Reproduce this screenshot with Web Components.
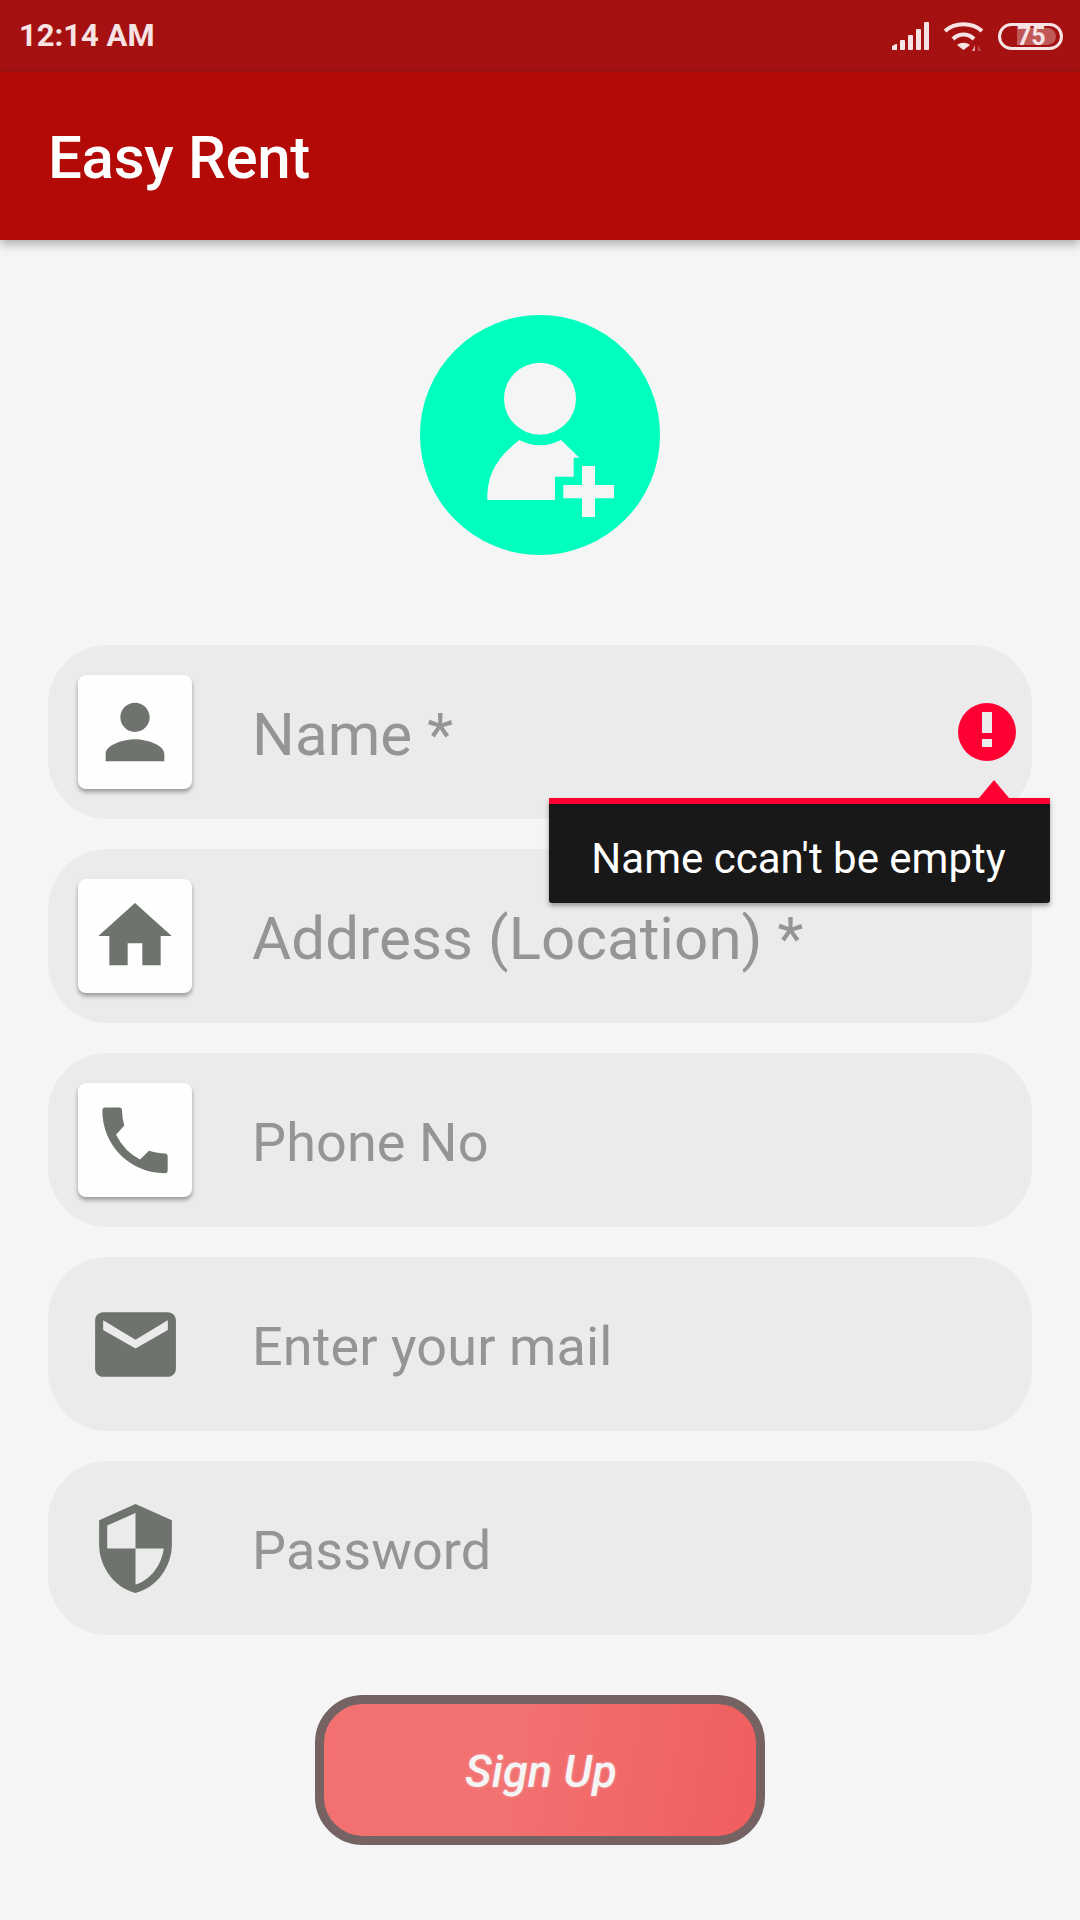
<!DOCTYPE html>
<html>
<head>
<meta charset="utf-8">
<title>Easy Rent</title>
<style>
html, body {
    margin: 0;
    padding: 0;
    background: #f5f5f5;
    font-family: Roboto, "Liberation Sans", sans-serif;
}
svg {
    display: block;
}
</style>
</head>
<body>
<signup-screen>
    <status-bar time="12:14 AM" battery="75"></status-bar>
    <app-toolbar>Easy Rent</app-toolbar>
    <avatar-picker></avatar-picker>

    <form-field boxed size="60">
        <svg slot="icon" width="88" height="88" viewBox="0 0 24 24"><path d="M12 12c2.21 0 4-1.79 4-4s-1.79-4-4-4-4 1.79-4 4 1.79 4 4 4zm0 2c-2.67 0-8 1.34-8 4v2h16v-2c0-2.66-5.33-4-8-4z"/></svg>
        Name *
        <error-tip slot="error">Name ccan't be empty</error-tip>
    </form-field>
    <form-field boxed size="60">
        <svg slot="icon" width="88" height="88" viewBox="0 0 24 24"><path d="M10 20v-6h4v6h5v-8h3L12 3 2 12h3v8z"/></svg>
        Address (Location) *
    </form-field>
    <form-field boxed>
        <svg slot="icon" width="88" height="88" viewBox="183 166.5 264 264"><path d="M217 210Q217 201 226 201H268Q276 201 276 210Q276 235 283 255L258 283Q285 335 330 357L357 331Q385 339 405 339Q413 340 413 348V390Q413 398 405 398C300 398 217 315 217 210Z"/></svg>
        Phone No
    </form-field>
    <form-field>
        <svg slot="icon" width="97" height="97" viewBox="0 0 24 24"><path fill-rule="evenodd" d="M20 4H4c-1.1 0-1.99.9-1.99 2L2 18c0 1.1.9 2 2 2h16c1.1 0 2-.9 2-2V6c0-1.1-.9-2-2-2zm0 4.4l-8 4.6-8-4.600V6l8 4.800 8-4.800v2.400z"/></svg>
        Enter your mail
    </form-field>
    <form-field>
        <svg slot="icon" width="97" height="97" viewBox="0 0 24 24"><path d="M12 1L3 5v6c0 5.550 3.840 10.740 9 12 5.160-1.260 9-6.450 9-12V5l-9-4zm0 10.990h7c-.53 4.120-3.280 7.790-7 8.940V12H5V6.300l7-3.110v8.800z"/></svg>
        Password
    </form-field>

    <signup-button>Sign Up</signup-button>
</signup-screen>

<script>
class SignupScreen extends HTMLElement
{
    constructor() {
        super()

        const shadow = this.attachShadow({ mode: 'open' })
        shadow.innerHTML = `
        <style>
        :host {
            display: flex;
            flex-direction: column;
            width: 1080px;
            height: 1920px;
            overflow: hidden;
            background: #f5f5f5;
        }
        </style>
        <slot></slot>
        `
    }
}

class StatusBar extends HTMLElement
{
    constructor() {
        super()

        const shadow = this.attachShadow({ mode: 'open' })
        shadow.innerHTML = `
        <style>
        :host {
            display: flex;
            align-items: center;
            justify-content: space-between;
            height: 72px;
            padding: 0 17px 0 19px;
            background: #a51111;
            color: #f7e3e3;
            flex: none;
        }
        .time {
            font-size: 31px;
            font-weight: 700;
            line-height: 72px;
        }
        .icons {
            display: flex;
            align-items: center;
            gap: 14px;
        }
        svg {
            display: block;
        }
        .battery {
            position: relative;
            box-sizing: border-box;
            display: flex;
            align-items: center;
            width: 65px;
            height: 27px;
            padding-left: 16px;
            border: 3px solid #f7e3e3;
            border-radius: 14px;
        }
        .level {
            position: absolute;
            left: 16px;
            top: 2px;
            bottom: 2px;
            width: 39px;
            border-radius: 0 9px 9px 0;
            background: rgba(255, 255, 255, 0.3);
        }
        .percent {
            position: relative;
            font-size: 25px;
            font-weight: 700;
            line-height: 21px;
        }
        </style>
        <span class="time"></span>
        <div class="icons">
            <svg width="38" height="28" viewBox="0 0 38 28" fill="#f7e3e3">
                <path d="M1 28V24L5 22H6V28Z"/>
                <rect x="9" y="18" width="5" height="10" rx="1"/>
                <rect x="17" y="13" width="5" height="15" rx="1"/>
                <rect x="25" y="7" width="5" height="21" rx="1"/>
                <rect x="33" y="0" width="5" height="28" rx="1"/>
            </svg>
            <svg width="41" height="29" viewBox="0 0 41 29" fill="none" stroke="#f7e3e3" stroke-width="4">
                <path d="M2 9C12 0 29 0 39 9"/>
                <path d="M10 17C16 11 25 11 31 17"/>
                <path fill="#f7e3e3" stroke="none" d="M20.500 28L14 23C18 20 23 20 27 23Z"/>
                <path fill="#f7e3e3" stroke="none" opacity="0.7" d="M32 23L32 29L29 29Z"/>
                <path fill="#f7e3e3" stroke="none" opacity="0.3" d="M35 23L35 29L38 29Z"/>
            </svg>
            <div class="battery">
                <span class="level"></span>
                <span class="percent"></span>
            </div>
        </div>
        `
        shadow.querySelector('.time').textContent = this.getAttribute('time')
        shadow.querySelector('.percent').textContent = this.getAttribute('battery')
    }
}

class AppToolbar extends HTMLElement
{
    constructor() {
        super()

        const shadow = this.attachShadow({ mode: 'open' })
        shadow.innerHTML = `
        <style>
        :host {
            display: flex;
            align-items: center;
            flex: none;
            box-sizing: border-box;
            height: 168px;
            padding: 2px 0 0 48px;
            background: #b30a08;
            color: #fff;
            font-size: 60px;
            font-weight: 500;
            letter-spacing: -0.3px;
            box-shadow: 0 4px 10px rgba(0, 0, 0, 0.3);
            position: relative;
        }
        </style>
        <slot></slot>
        `
    }
}

class AvatarPicker extends HTMLElement
{
    constructor() {
        super()

        const shadow = this.attachShadow({ mode: 'open' })
        shadow.innerHTML = `
        <style>
        :host {
            display: flex;
            justify-content: center;
            flex: none;
            margin: 75px 0 90px;
        }
        svg {
            display: block;
        }
        </style>
        <svg width="240" height="240" viewBox="60 45 720 720">
            <circle cx="420" cy="405" r="360" fill="#00ffbf"/>
            <g fill="#f5f5f5">
                <circle cx="420" cy="296" r="108"/>
                <path d="M358 420Q420 452 483 420L538 473H521V530H465V600H262C262 520 290 475 358 420Z"/>
                <path d="M546 498H585V555H642V595H585V651H546V595H490V555H546Z"/>
            </g>
        </svg>
        `
    }
}

class FormField extends HTMLElement
{
    constructor() {
        super()

        const shadow = this.attachShadow({ mode: 'open' })
        const size = this.getAttribute('size') || 54
        shadow.innerHTML = `
        <style>
        :host {
            display: flex;
            align-items: center;
            position: relative;
            flex: none;
            height: 174px;
            margin: 0 48px 30px;
            padding-left: 30px;
            border-radius: 60px;
            background: #ebebeb;
            color: #959595;
            fill: #6f736d;
            font-size: ${size}px;
            letter-spacing: 0.1px;
        }
        .icon {
            display: flex;
            align-items: center;
            justify-content: center;
            flex: none;
            width: 114px;
            height: 114px;
            margin-right: 60px;
            border-radius: 8px;
        }
        :host([boxed]) .icon {
            background: #fefefe;
            box-shadow: 0 3px 4px rgba(0, 0, 0, 0.35);
        }
        .label {
            padding-top: 4px;
        }
        </style>
        <div class="icon"><slot name="icon"></slot></div>
        <div class="label"><slot></slot></div>
        <slot name="error"></slot>
        `
    }
}

class ErrorTip extends HTMLElement
{
    constructor() {
        super()

        const shadow = this.attachShadow({ mode: 'open' })
        shadow.innerHTML = `
        <style>
        :host {
            display: block;
        }
        .mark {
            position: absolute;
            right: 16px;
            top: 58px;
            display: block;
        }
        .tip {
            position: absolute;
            left: 501px;
            top: 153px;
            z-index: 2;
            box-sizing: border-box;
            width: 501px;
            height: 105px;
            padding: 30px 2px 0 0;
            border-top: 6px solid #ff0033;
            border-radius: 0 0 3px 3px;
            background: #181818;
            box-shadow: 0 3px 5px rgba(0, 0, 0, 0.35);
            color: #fff;
            font-size: 42px;
            line-height: 50px;
            letter-spacing: 0;
            text-align: center;
        }
        .arrow {
            position: absolute;
            right: 41px;
            top: -24px;
            width: 0;
            height: 0;
            border-left: 15px solid transparent;
            border-right: 15px solid transparent;
            border-bottom: 18px solid #ff0033;
        }
        </style>
        <svg class="mark" width="58" height="58" viewBox="0 0 58 58">
            <path fill="#ff0033" fill-rule="evenodd" d="M29 0A29 29 0 1 0 29 58A29 29 0 1 0 29 0ZM24 9H34V30H24ZM24 36H34V44H24Z"/>
        </svg>
        <div class="tip">
            <span class="arrow"></span>
            <slot></slot>
        </div>
        `
    }
}

class SignupButton extends HTMLElement
{
    constructor() {
        super()

        const shadow = this.attachShadow({ mode: 'open' })
        shadow.innerHTML = `
        <style>
        :host {
            display: flex;
            align-items: center;
            justify-content: center;
            flex: none;
            box-sizing: border-box;
            align-self: center;
            width: 450px;
            height: 150px;
            margin-top: 30px;
            padding: 2px 0 0 2px;
            border: 9px solid #756363;
            border-radius: 48px;
            background: linear-gradient(100deg, #f27070 0%, #f27272 40%, #f05e5e 100%);
            color: #f5f5f5;
            font-size: 45px;
            font-style: italic;
            font-weight: 500;
            letter-spacing: 0.15px;
            text-shadow: 0 0 3px rgba(255, 255, 255, 0.4);
        }
        </style>
        <slot></slot>
        `
    }
}

customElements.define('signup-screen', SignupScreen)
customElements.define('status-bar', StatusBar)
customElements.define('app-toolbar', AppToolbar)
customElements.define('avatar-picker', AvatarPicker)
customElements.define('form-field', FormField)
customElements.define('error-tip', ErrorTip)
customElements.define('signup-button', SignupButton)
</script>
</body>
</html>
